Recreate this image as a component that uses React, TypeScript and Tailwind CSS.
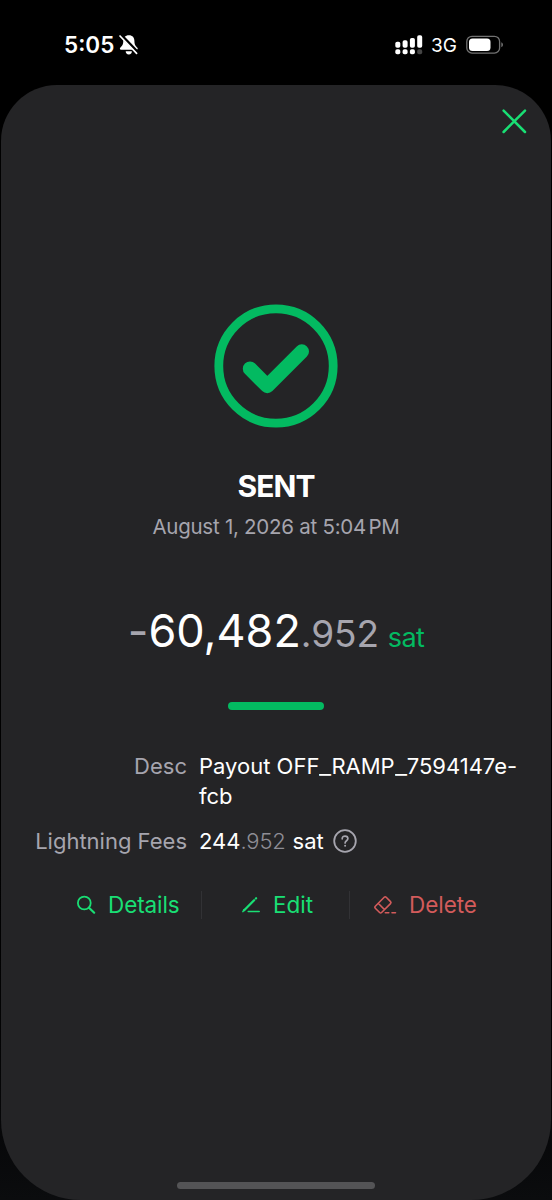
import type { ReactNode } from "react";

function StatusBar() {
  return (
    <header className="flex h-[85px] shrink-0 items-start justify-between pt-[30px] pr-[48px] pl-[64px]">
      <div className="flex h-[30px] items-center gap-[4px]">
        <span className="text-[22.5px] leading-[30px] font-semibold">5:05</span>
        <svg width="21" height="22" viewBox="0 0 21 22" fill="none">
          <path
            d="M10.9 1.3c-3.700 0-5.600 2.400-5.600 5.600 0 4-1.500 5-3.100 6.800-.6.7-.3 2 .8 2h15.600c1.100 0 1.400-1.300.8-2-1.600-1.800-3-2.800-3-6.800 0-3.200-1.800-5.600-5.500-5.600Z"
            fill="white"
          />
          <path d="M7.700 17.300h6.200a3.100 3.100 0 0 1-6.200 0Z" fill="white" />
          <path d="M3.200 1.300 20 18.900" stroke="black" strokeWidth="3.400" />
          <path d="M2 2 18.600 19.400" stroke="white" strokeWidth="1.700" strokeLinecap="round" />
        </svg>
      </div>
      <div className="flex h-[30px] items-center">
        <svg width="28" height="20" viewBox="0 0 28 20" fill="white">
          <rect x="0.300" y="6.700" width="5" height="6" rx="1.800" />
          <rect x="7.600" y="5.200" width="5" height="7.500" rx="1.800" />
          <rect x="14.900" y="3" width="5" height="9.700" rx="1.800" />
          <rect x="22.200" y="0.300" width="5" height="12.400" rx="1.800" />
          <rect x="0.300" y="14.300" width="5" height="5" rx="1.800" />
          <rect x="7.600" y="14.300" width="5" height="5" rx="1.800" />
          <rect x="14.900" y="14.300" width="5" height="5" rx="1.800" />
          <rect x="22.200" y="14.300" width="5" height="5" rx="1.800" fill="#454545" />
        </svg>
        <span className="ml-[8px] w-[35px] pt-px text-[19px] leading-[30px] tracking-[-0.1px]">3G</span>
        <svg width="38" height="20" viewBox="0 0 38 20">
          <rect x="0.800" y="1.300" width="32.800" height="16.800" rx="5.200" fill="none" stroke="#727272" strokeWidth="1.300" />
          <rect x="3" y="3.500" width="21.500" height="12.400" rx="3.500" fill="white" />
          <path d="M35.300 7.200c2.200.8 2.200 4.200 0 5Z" fill="#727272" />
        </svg>
      </div>
    </header>
  );
}

function Underscore() {
  return <span className="inline-block w-[12px] origin-left scale-x-120">_</span>;
}

function Action({ icon, label, className }: { icon: ReactNode; label: string; className: string }) {
  return (
    <button className={`flex h-[30px] items-center text-[22.5px] leading-[30px] ${className}`}>
      {icon}
      <span>{label}</span>
    </button>
  );
}

export default function App() {
  return (
    <div className="flex h-[1200px] w-[552px] flex-col overflow-hidden bg-linear-to-b from-black from-60% to-[#0b0c0e] font-['Inter',sans-serif] text-white">
      <StatusBar />
      <main className="mx-px flex h-[1115px] flex-col items-center rounded-t-[56px] rounded-b-[80px] bg-[#242426]">
        <div className="flex w-full justify-end pt-[23px] pr-[24px]">
          <button aria-label="Close" className="size-[26px]">
            <svg width="26" height="26" viewBox="0 0 26 26" fill="none" stroke="#19df74" strokeWidth="2.500" strokeLinecap="round">
              <path d="m2.600 2.600 21.400 21.400M24 2.600 2.600 24" />
            </svg>
          </button>
        </div>
        <svg className="mt-[170px] shrink-0" width="124" height="124" viewBox="0 0 124 124" fill="none" stroke="#03ba61">
          <circle cx="62" cy="62" r="57.200" strokeWidth="8.800" />
          <path d="m36 64.700 17.300 17.300 34.500-34.500" strokeWidth="14.400" strokeLinecap="round" strokeLinejoin="round" />
        </svg>
        <h1 className="mt-[40px] text-[30px] leading-[36px] font-bold tracking-[-0.9px]">SENT</h1>
        <p className="mt-[8px] flex text-[20.5px] leading-[30px] tracking-[-0.26px] whitespace-nowrap text-[#a6a5ae]">
          August 1, 2026 at 5:04<span className="ml-[2.500px]">PM</span>
        </p>
        <div className="mt-[59px] flex h-[60px] items-baseline whitespace-nowrap">
          <span className="text-[45px] leading-[60px] text-[#a6a5ae]">-</span>
          <span className="text-[45px] leading-[60px]">60,482</span>
          <span className="text-[37px] leading-[48px] tracking-[-0.1px] text-[#a6a5ae]">.952</span>
          <span className="ml-[9px] text-[27px] leading-[36px] tracking-[-0.6px] text-[#03ba61]">sat</span>
        </div>
        <div className="mt-[41px] h-[8px] w-[96px] shrink-0 rounded-full bg-[#03ba61]" />
        <dl className="mt-[41px] grid w-full grid-cols-[186px_1fr] gap-x-[12px] gap-y-[15px] text-[22px] leading-[30px]">
          <dt className="text-right text-[#a6a5ae]">Desc</dt>
          <dd className="whitespace-nowrap">
            Payout OFF
            <Underscore />
            RAMP
            <Underscore />
            7594147e-
            <br />
            fcb
          </dd>
          <dt className="text-right text-[#a6a5ae]">Lightning Fees</dt>
          <dd className="flex items-center">
            <span>244</span>
            <span className="font-light tracking-[-0.2px] text-[#8e8d95]">.952</span>
            <span className="ml-[7px]">sat</span>
            <svg className="ml-[8px]" width="26" height="26" viewBox="0 0 26 26" fill="none" stroke="#a6a5ae" strokeLinecap="round">
              <circle cx="13" cy="13" r="10.800" strokeWidth="1.800" />
              <path d="M10.200 10.800c0-3.800 5.700-3.500 5.700-.2 0 2.100-2.800 2.200-2.800 4.300" strokeWidth="1.700" />
              <path d="M13.100 17.700v.1" strokeWidth="2" />
            </svg>
          </dd>
        </dl>
        <div className="mt-[34px] flex h-[30px] w-full items-center text-[#19df74]">
          <Action
            className="w-[200px] gap-[12px] pl-[75px] tracking-[-0.1px]"
            label="Details"
            icon={
              <svg className="shrink-0" width="20" height="20" viewBox="0 0 20 20" fill="none" stroke="currentColor" strokeWidth="1.800" strokeLinecap="round">
                <circle cx="8.300" cy="8" r="6.400" />
                <path d="m13 12.700 5.200 5" strokeWidth="2.200" />
              </svg>
            }
          />
          <div className="h-[28px] w-px bg-[#323235]" />
          <Action
            className="w-[147px] gap-[12px] pl-[39px]"
            label="Edit"
            icon={
              <svg className="shrink-0" width="20" height="20" viewBox="0 0 20 20" fill="none" stroke="currentColor" strokeLinecap="round">
                <path d="M3.200 15.200 13.100 5.300" strokeWidth="2.300" />
                <path d="m14.900 3.500.2-.2" strokeWidth="2.300" />
                <path d="m1.900 16.600 1.200-2M7.200 16.500h11" strokeWidth="1.500" />
              </svg>
            }
          />
          <div className="h-[28px] w-px bg-[#323235]" />
          <Action
            className="gap-[11px] pl-[23px] tracking-[-0.05px] text-[#d35b5b]"
            label="Delete"
            icon={
              <svg className="shrink-0" width="25" height="22" viewBox="0 0 25 22" fill="none" stroke="currentColor" strokeWidth="1.600" strokeLinejoin="round" strokeLinecap="round">
                <path d="M2.300 12.200 11.200 3.300q1-1 2 0l4.300 4.300q1 1 0 2l-8.900 8.900q-1 1-2 0l-4.300-4.300q-1-1 0-2ZM5.200 9.300l6.300 6.300" />
                <path d="M12.300 18.700h3.500M19 18.700h3.500" />
              </svg>
            }
          />
        </div>
        <div className="mt-[262px] h-[7px] w-[198px] shrink-0 rounded-full bg-[#545456]" />
      </main>
    </div>
  );
}
